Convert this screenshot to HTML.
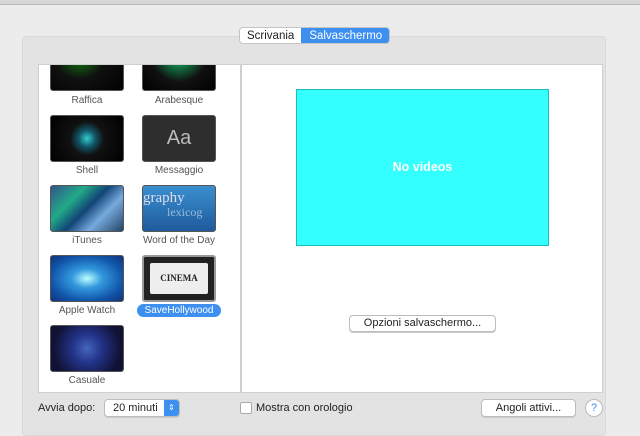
<!DOCTYPE html><html><head><style>
*{margin:0;padding:0;box-sizing:border-box}
body{width:640px;height:426px;background:#ececec;font-family:"Liberation Sans",sans-serif;position:relative;overflow:hidden;font-size:11px;color:#222}
.a{position:absolute}
.top{left:0;top:0;width:640px;height:5px;background:#d6d6d6;border-bottom:1px solid #b8b8b8}
.box{left:22px;top:36px;width:584px;height:400px;background:#e3e3e3;border:1px solid #d8d8d8;border-radius:4px}
.tabs{left:239px;top:27px;height:17px;display:flex;border:1px solid #c4c4c4;border-radius:4px;overflow:hidden;font-size:11.5px;background:#fff}
.tabs div{padding:1px 7px 0;line-height:15px}
.list{left:38px;top:64px;width:203px;height:329px;background:#fff;border:1px solid #cfcfcf;overflow:hidden}
.pane{left:241px;top:64px;width:362px;height:329px;background:#fff;border:1px solid #cfcfcf}
.th{position:absolute;width:74px;height:47px;border-radius:3px;border:1px solid #555}
.lb{position:absolute;width:100px;text-align:center;font-size:10px;color:#555}
.btn{background:#fff;border:1px solid #bdbdbd;border-radius:4px;text-align:center;font-size:11px;line-height:17px;box-shadow:0 1px 0 #ccc}
</style></head><body>
<div class="a top"></div>
<div class="a box"></div>
<div class="a tabs"><div>Scrivania</div><div style="background:#3d8ff0;color:#fff;border-left:1px solid #3d8ff0">Salvaschermo</div></div>
<div class="a list">
<div class="th" style="left:11px;top:-21px;background:radial-gradient(circle at 40% 20%,#6a5 0,#151 20%,#111 45%,#000)"></div>
<div class="lb" style="left:-2px;top:30px">Raffica</div>
<div class="th" style="left:103px;top:-21px;background:radial-gradient(circle at 50% 20%,#4c8 0,#174 25%,#111 55%,#000)"></div>
<div class="lb" style="left:90px;top:30px">Arabesque</div>
<div class="th" style="left:11px;top:50px;background:radial-gradient(circle,#3cc 0,#156 20%,#111 40%,#000)"></div>
<div class="lb" style="left:-2px;top:100px">Shell</div>
<div class="th" style="left:103px;top:50px;background:#2e2e2e;color:#bbb;font-size:20px;text-align:center;line-height:44px">Aa</div>
<div class="lb" style="left:90px;top:100px">Messaggio</div>
<div class="th" style="left:11px;top:120px;background:linear-gradient(135deg,#358 0,#2a8 30%,#147 50%,#7ad 70%,#246)"></div>
<div class="lb" style="left:-2px;top:170px">iTunes</div>
<div class="th" style="left:103px;top:120px;background:linear-gradient(#3a8fcf,#1f5a9c);color:#dde;font-family:'Liberation Serif',serif;font-size:15px;overflow:hidden;line-height:14px;padding-top:5px">graphy<br><span style="font-size:12px;padding-left:24px;color:#9bd">lexicog</span></div>
<div class="lb" style="left:90px;top:170px">Word of the Day</div>
<div class="th" style="left:11px;top:190px;background:radial-gradient(ellipse,#bff 0,#39d 30%,#15a 70%,#137)"></div>
<div class="lb" style="left:-2px;top:240px">Apple Watch</div>
<div class="th" style="left:103px;top:190px;background:#222;border:2px solid #999"><div style="margin:6px 6px;height:31px;background:#eee;border-radius:2px;text-align:center;font:bold 9px 'Liberation Serif',serif;line-height:31px;color:#222">CINEMA</div></div>
<div class="lb" style="left:98px;top:239px;width:84px;background:#3d8ff0;color:#fff;border-radius:7px;line-height:13px">SaveHollywood</div>
<div class="th" style="left:11px;top:260px;background:radial-gradient(circle,#46b 0,#238 35%,#113 80%)"></div>
<div class="lb" style="left:-2px;top:310px">Casuale</div>
</div>
<div class="a pane"></div>
<div class="a" style="left:296px;top:89px;width:253px;height:157px;background:#33ffff;border:1px solid #2bb;color:#fff;font-weight:bold;font-size:12.5px;text-align:center;line-height:154px">No videos</div>
<div class="a btn" style="left:349px;top:315px;width:147px;height:17px;line-height:15px">Opzioni salvaschermo...</div>
<div class="a" style="left:38px;top:402px;font-size:11px">Avvia dopo:</div>
<div class="a btn" style="left:104px;top:399px;width:76px;height:18px;text-align:left;padding-left:8px;line-height:16px">20 minuti<span style="position:absolute;right:0;top:0;width:15px;height:16px;background:#3d8ff0;color:#fff;font-size:8px;line-height:16px;text-align:center;border-radius:0 3px 3px 0">⇕</span></div>
<div class="a" style="left:240px;top:402px;width:12px;height:12px;background:#fff;border:1px solid #aaa;border-radius:2px"></div>
<div class="a" style="left:256px;top:402px">Mostra con orologio</div>
<div class="a btn" style="left:481px;top:399px;width:95px;height:18px;line-height:16px">Angoli attivi...</div>
<div class="a" style="left:585px;top:399px;width:18px;height:18px;border-radius:50%;background:#fff;border:1px solid #bbb;color:#3d8ff0;text-align:center;line-height:16px;font-size:11px">?</div>
</body></html>
